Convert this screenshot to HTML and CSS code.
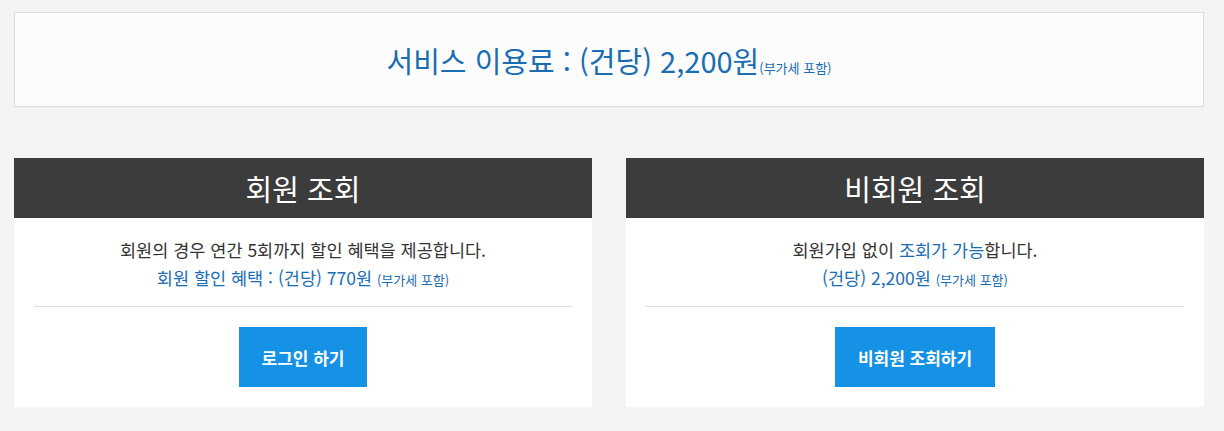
FILE: index.html
```html
<!DOCTYPE html>
<html lang="ko">
<head>
    <meta charset="UTF-8">
    <meta name="viewport" content="width=device-width, initial-scale=1.0">
    <title>조회 서비스</title>
    <link rel="stylesheet" href="styles.css">
</head>
<body>

    <div class="wrap">
        <div class="fee-box">
            <p class="fee">서비스 이용료 : (건당) 2,200원<span class="vat">(부가세 포함)</span></p>
        </div>

        <div class="cards">
            <div class="card">
                <h2 class="card-title">회원 조회</h2>
                <div class="card-body">
                    <p class="desc">회원의 경우 연간 5회까지 할인 혜택을 제공합니다.</p>
                    <p class="price">회원 할인 혜택 : (건당) 770원 <span class="vat-sm">(부가세 포함)</span></p>
                    <hr class="divider">
                    <button class="btn">로그인 하기</button>
                </div>
            </div>

            <div class="card">
                <h2 class="card-title">비회원 조회</h2>
                <div class="card-body">
                    <p class="desc">회원가입 없이 <span class="hl">조회가 가능</span>합니다.</p>
                    <p class="price">(건당) 2,200원 <span class="vat-sm">(부가세 포함)</span></p>
                    <hr class="divider">
                    <button class="btn">비회원 조회하기</button>
                </div>
            </div>
        </div>
    </div>

</body>
</html>
```

FILE: styles.css
```css
body {
    font-family: "Noto Sans CJK KR", "Noto Sans", sans-serif;
    background-color: #f4f4f4;
    margin: 0;
    color: #333;
}
.wrap {
    width: 1190px;
    margin: 12px 14px;
}
.fee-box {
    background-color: #fcfcfc;
    border: 1px solid #dcdcdc;
    height: 93px;
    display: flex;
    align-items: center;
    justify-content: center;
}
.fee {
    margin: 0;
    color: #1a6db3;
    font-size: 29px;
}
.vat {
    font-size: 13px;
}
.cards {
    display: flex;
    gap: 34px;
    margin-top: 51px;
}
.card {
    flex: 1;
    background-color: #fff;
}
.card-title {
    margin: 0;
    height: 60px;
    line-height: 60px;
    background-color: #3c3c3c;
    color: #fff;
    font-size: 29px;
    font-weight: 400;
    text-align: center;
}
.card-body {
    padding: 18px 20px 20px;
    text-align: center;
}
.desc, .price {
    margin: 0;
    font-size: 17.5px;
    line-height: 28px;
}
.price, .hl {
    color: #1a6db3;
}
.vat-sm {
    font-size: 13px;
}
.divider {
    border: none;
    border-top: 1px solid #ddd;
    margin: 12px 0 20px;
}
.btn {
    background-color: #1591e6;
    color: #fff;
    border: none;
    height: 60px;
    padding: 0 23px;
    font-family: inherit;
    font-size: 17px;
    font-weight: 700;
    cursor: pointer;
}
.btn:hover {
    background-color: #0f7fcc;
}
```
